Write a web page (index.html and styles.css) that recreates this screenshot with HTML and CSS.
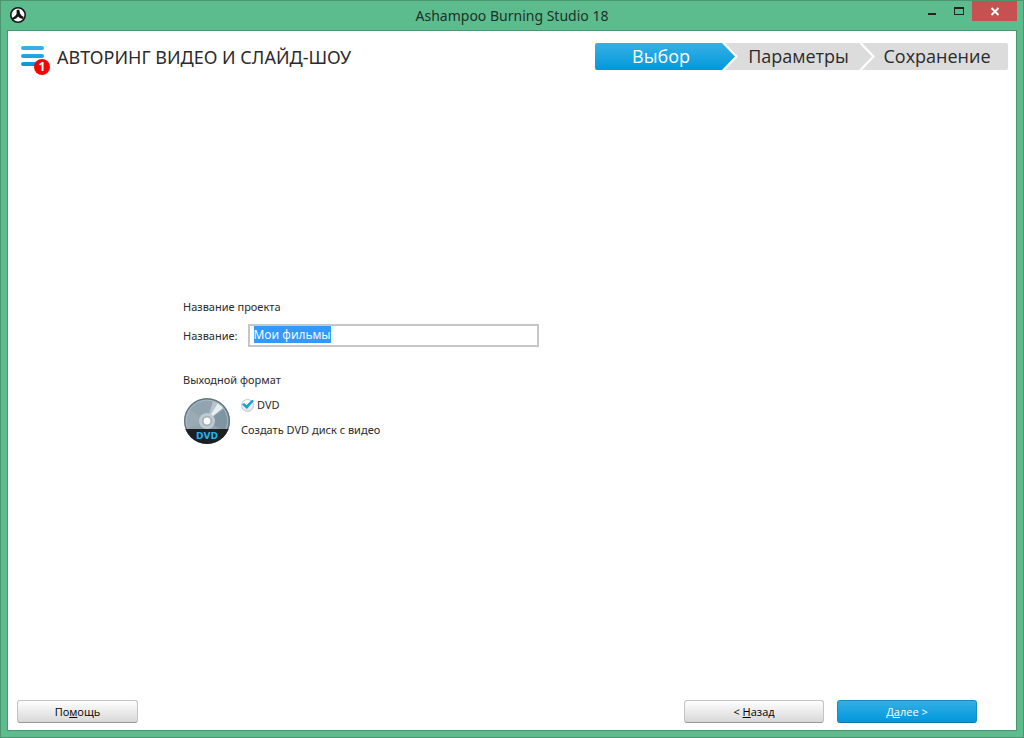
FILE: index.html
```html
<!DOCTYPE html>
<html lang="ru">
<head>
<meta charset="utf-8">
<title>Ashampoo Burning Studio 18</title>
<link rel="stylesheet" href="styles.css">
</head>
<body>
<div class="window">
  <header class="titlebar">
    <svg class="app-icon" viewBox="0 0 16 16" aria-hidden="true">
      <circle cx="8" cy="8" r="7.200" fill="#fff" stroke="#161616" stroke-width="1.600"/>
      <path d="M6.600 3l2.600-.4.9 3.800 1.400 2 2.300 1.500-.9 2.200-3.200-1-1.600-1.500-1.900 2-3.100 1.100-1-1.800 3-2 1.500-1.900z" fill="#161616"/>
    </svg>
    <h1 class="window-title">Ashampoo Burning Studio 18</h1>
    <div class="controls">
      <button class="control" type="button" aria-label="Свернуть"><svg viewBox="0 0 27 20"><path d="M10 12h8v2h-8z" fill="#222"/></svg></button>
      <button class="control" type="button" aria-label="Развернуть"><svg viewBox="0 0 27 20"><path d="M9 6h10v8H9zM10 8v5h8V8z" fill="#222" fill-rule="evenodd"/></svg></button>
      <button class="control control-close" type="button" aria-label="Закрыть"><svg viewBox="0 0 45 20"><path d="M19.500 7l7 7M26.500 7l-7 7" stroke="#fff" stroke-width="1.900"/></svg></button>
    </div>
  </header>
  <main class="client">
    <div class="topbar">
      <button class="menu" type="button" aria-label="Меню">
        <svg class="menu-icon" viewBox="0 0 23 20"><defs><linearGradient id="bars" x1="0" y1="0" x2="0" y2="20" gradientUnits="userSpaceOnUse"><stop offset="0" stop-color="#3cb2e6"/><stop offset="1" stop-color="#0499dc"/></linearGradient></defs><path d="M2 2h19M2 10h19M2 18h19" stroke="url(#bars)" stroke-width="4" stroke-linecap="round"/></svg>
        <span class="badge">1</span>
      </button>
      <h2 class="heading">АВТОРИНГ ВИДЕО И СЛАЙД-ШОУ</h2>
      <ol class="steps">
        <li class="step step-active" aria-current="step">Выбор</li>
        <li class="step step-middle">Параметры</li>
        <li class="step step-last">Сохранение</li>
      </ol>
    </div>
    <form class="form" id="project">
      <h3 class="section-title">Название проекта</h3>
      <div class="field">
        <label for="name">Название:</label>
        <input class="text-box" id="name" type="text" value="Мои фильмы" autofocus>
      </div>
      <h3 class="section-title">Выходной формат</h3>
      <div class="format">
        <svg class="disc" viewBox="0 0 46 46" aria-hidden="true">
          <defs>
            <clipPath id="round"><circle cx="23" cy="23" r="23"/></clipPath>
          </defs>
          <g clip-path="url(#round)">
            <rect width="46" height="46" fill="#91a4b0"/>
            <path d="M23 23L46 7v30z" fill="#8095a2"/>
            <path d="M23 23L0 8v24z" fill="#9aabb5"/>
            <path d="M23 23L29 3l11 5z" fill="#b7c4cc"/>
            <path d="M23 23L34 5l5 5z" fill="#e8eef1"/>
            <circle cx="23" cy="23" r="22.300" fill="none" stroke="#627480" stroke-width="1.400"/>
            <circle cx="23" cy="23" r="20.800" fill="none" stroke="#b3c0c7" stroke-width=".8"/>
            <circle cx="23" cy="23" r="8" fill="#c0cbd1"/>
            <circle cx="23" cy="23" r="5.200" fill="#a3b1b9"/>
            <circle cx="23" cy="23" r="3.400" fill="#fff"/>
            <path d="M0 31h46v15H0z" fill="#1d2023"/>
          </g>
          <text class="disc-label" x="23" y="41" text-anchor="middle">DVD</text>
        </svg>
        <div class="format-options">
          <label class="check"><input class="check-box" type="checkbox" checked><span>DVD</span></label>
          <p class="description">Создать DVD диск с видео</p>
        </div>
      </div>
    </form>
    <footer class="actions">
      <button class="button button-help" type="button">По<u>м</u>ощь</button>
      <button class="button" type="button">&lt; <u>Н</u>азад</button>
      <button class="button button-primary" type="submit" form="project">Д<u>а</u>лее &gt;</button>
    </footer>
  </main>
</div>
<script src="app.js"></script>
</body>
</html>
```
FILE: styles.css
```css
* { box-sizing: border-box; }

body {
  margin: 0;
  font: 11px/16px "Noto Sans", "Open Sans", sans-serif;
  color: #2b2b2b;
}

h1, h2, h3, p, ol { margin: 0; padding: 0; font-weight: 400; }
button { font: inherit; padding: 0; border: 0; background: none; }
svg { display: block; }

.window {
  display: flex;
  flex-direction: column;
  min-height: 100vh;
  padding: 0 6px 6px;
  border: 1px solid #4c9571;
  background: #5cbc8e;
}

.titlebar {
  display: grid;
  grid-template-columns: 1fr auto 1fr;
  align-items: start;
  height: 29px;
}

.app-icon { width: 16px; height: 16px; margin: 6px 0 0 3px; }

.window-title {
  font: 14px/30px "Noto Sans", sans-serif;
  color: #1d3328;
}

.controls { display: flex; justify-content: flex-end; }
.control { width: 27px; height: 20px; }
.control svg { width: 100%; height: 20px; }
.control-close { width: 45px; background: #c75050; }

.client {
  flex: 1;
  display: flex;
  flex-direction: column;
  border: 1px solid #4c9571;
  background: #fff;
}

.topbar {
  display: flex;
  align-items: flex-start;
  padding: 12px 8px 0 13px;
}

.menu { position: relative; width: 23px; margin: 3px 13px 0 0; }
.menu-icon { width: 23px; height: 20px; }

.badge {
  position: absolute;
  left: 13px;
  top: 13px;
  width: 16px;
  height: 16px;
  border-radius: 50%;
  background: #f20500;
  color: #fff;
  font: bold 12px/16px "Open Sans", sans-serif;
}

.heading { flex: 1; font: 18px/28px "Noto Sans", sans-serif; white-space: nowrap; }

.steps { display: flex; list-style: none; }

.step {
  width: 147px;
  height: 27px;
  margin-left: -10px;
  background: #dcdcdc;
  font: 18px/27px "Open Sans", sans-serif;
  text-align: center;
}

.step-active {
  width: 140px;
  margin-left: 0;
  padding-right: 8px;
  border-radius: 2px 0 0 2px;
  background: linear-gradient(#38b0e6, #0098dc);
  color: #fff;
  clip-path: polygon(0 0, 127px 0, 100% 50%, 127px 100%, 0 100%);
}

.step-middle {
  clip-path: polygon(0 0, 134px 0, 100% 50%, 134px 100%, 0 100%, 13px 50%);
}

.step-last {
  width: 146px;
  padding-left: 4px;
  border-radius: 0 2px 2px 0;
  clip-path: polygon(0 0, 100% 0, 100% 100%, 0 100%, 13px 50%);
}

.form { flex: 1; padding: 228px 175px 0; }
.section-title { font-size: 11px; line-height: 16px; }

.field {
  display: flex;
  align-items: center;
  gap: 10px;
  margin: 9px 0 25px;
}

.text-box {
  width: 291px;
  height: 23px;
  padding: 0 4px 2px;
  border: 2px solid #c6c6c6;
  border-radius: 0;
  outline: 0;
  background: #fff;
  font: 12px/15px "Open Sans", sans-serif;
  color: #2b2b2b;
}

.text-box::selection { background: #3399ff; color: #fff; }

.format { display: flex; gap: 11px; margin: 10px 0 0 1px; }
.disc { width: 46px; height: 46px; }
.disc-label { font: bold 9px "DejaVu Sans", sans-serif; fill: #22b2ee; }
.check { display: flex; align-items: center; gap: 3px; height: 14px; }

.check-box {
  appearance: none;
  width: 13px;
  height: 13px;
  margin: 0;
  border: 1px solid #c8c8c8;
  border-radius: 50%;
  background: linear-gradient(#fff, #e2e2e2);
}

.check-box:checked::before {
  content: "";
  display: block;
  width: 12px;
  height: 10px;
  background: #149fe0;
  clip-path: polygon(0 50%, 17% 36%, 38% 58%, 86% 0, 100% 16%, 40% 96%);
}

.description { margin-top: 10px; }

.actions { display: flex; gap: 13px; padding: 0 39px 7px 9px; }

.button {
  width: 140px;
  height: 23px;
  border: 1px solid #c3c3c3;
  border-bottom-color: #999;
  border-radius: 3px;
  background: linear-gradient(#fefefe, #d8d8d8);
  font: 11px/21px "Open Sans", sans-serif;
  color: #000;
}

.button-help { width: 121px; margin-right: auto; }

.button-primary {
  border-color: #1c8cc0;
  border-bottom-color: #0878aa;
  background: linear-gradient(#34aee6, #0098dc);
  color: #fff;
}
```
FILE: app.js
```js
const nameBox = document.getElementById("name");
nameBox.focus();
nameBox.select();
```
